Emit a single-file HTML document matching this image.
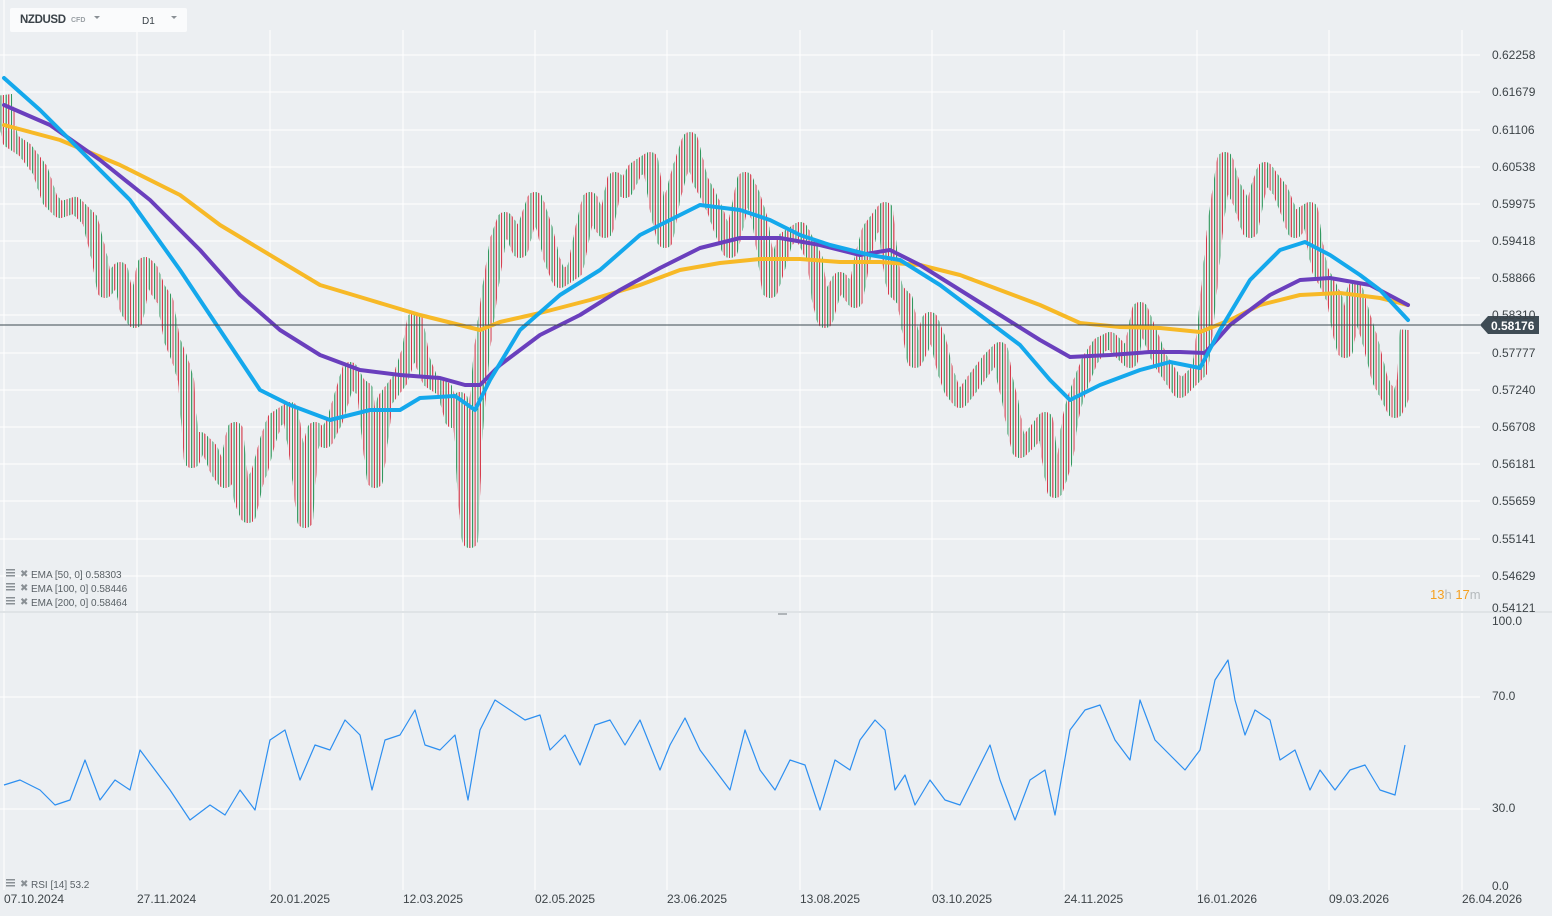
<!DOCTYPE html>
<html><head><meta charset="utf-8"><style>
html,body{margin:0;padding:0;background:#eceff2;}
body{width:1552px;height:916px;overflow:hidden;position:relative;font-family:"Liberation Sans",sans-serif;}
svg{position:absolute;left:0;top:0;}
.ax{font-size:12px;fill:#3d4448;}
.lg{font-size:10px;fill:#5a6166;}
</style></head><body>
<svg width="1552" height="916" viewBox="0 0 1552 916">
<defs>
<pattern id="cs" patternUnits="userSpaceOnUse" width="5.3" height="20">
<rect x="0" y="0" width="1.6" height="20" fill="#1f9050"/>
<rect x="2.6" y="0" width="1.6" height="20" fill="#d42a3c"/>
</pattern>
<pattern id="cw" patternUnits="userSpaceOnUse" width="5.3" height="20">
<rect x="0.5" y="0" width="0.7" height="20" fill="#1f9050"/>
<rect x="3.1" y="0" width="0.7" height="20" fill="#d42a3c"/>
</pattern>
<clipPath id="cp"><rect x="0" y="40" width="1410" height="560"/></clipPath>
</defs>
<g stroke="#ffffff" stroke-width="1">
<line x1="4" y1="0" x2="4" y2="890"/><line x1="137" y1="30" x2="137" y2="890"/><line x1="270" y1="30" x2="270" y2="890"/><line x1="403" y1="30" x2="403" y2="890"/><line x1="535" y1="30" x2="535" y2="890"/><line x1="667" y1="30" x2="667" y2="890"/><line x1="800" y1="30" x2="800" y2="890"/><line x1="932" y1="30" x2="932" y2="890"/><line x1="1064" y1="30" x2="1064" y2="890"/><line x1="1197" y1="30" x2="1197" y2="890"/><line x1="1329" y1="30" x2="1329" y2="890"/><line x1="1462" y1="30" x2="1462" y2="890"/>
<line x1="0" y1="55" x2="1480" y2="55"/><line x1="0" y1="92" x2="1480" y2="92"/><line x1="0" y1="130" x2="1480" y2="130"/><line x1="0" y1="167" x2="1480" y2="167"/><line x1="0" y1="204" x2="1480" y2="204"/><line x1="0" y1="241" x2="1480" y2="241"/><line x1="0" y1="278" x2="1480" y2="278"/><line x1="0" y1="315" x2="1480" y2="315"/><line x1="0" y1="353" x2="1480" y2="353"/><line x1="0" y1="390" x2="1480" y2="390"/><line x1="0" y1="427" x2="1480" y2="427"/><line x1="0" y1="464" x2="1480" y2="464"/><line x1="0" y1="501" x2="1480" y2="501"/><line x1="0" y1="539" x2="1480" y2="539"/><line x1="0" y1="576" x2="1480" y2="576"/>
<line x1="0" y1="697" x2="1480" y2="697"/><line x1="0" y1="809" x2="1480" y2="809"/>
<line x1="0" y1="612" x2="1552" y2="612" stroke="#dfe3e6" stroke-width="2"/>
</g>
<rect x="778" y="613" width="9" height="2" fill="#b0b5b9"/>
<g fill="none" stroke-linejoin="round" clip-path="url(#cp)">
<polyline id="px" stroke="url(#cw)" stroke-width="16" points="4,95 10,140 25,150 40,170 50,200 60,210 75,205 90,220 100,260 105,290 120,270 128,310 135,320 145,265 150,270 158,290 165,300 172,340 180,360 186,380 192,460 200,440 210,450 218,470 225,480 235,430 242,500 248,515 256,480 260,470 268,440 275,420 290,410 298,460 305,520 310,450 315,430 325,440 335,420 350,370 358,385 365,390 370,440 375,480 385,400 400,380 410,350 415,320 422,360 430,380 445,390 453,420 460,400 466,500 470,540 475,430 482,350 490,290 498,240 505,220 512,230 520,250 528,220 535,200 545,230 552,260 560,280 575,270 583,230 590,200 598,220 605,230 615,180 625,190 635,170 650,160 658,210 665,240 672,200 680,170 690,140 700,180 708,195 715,210 722,230 730,250 738,215 745,180 752,195 760,220 766,260 770,290 778,265 785,240 800,230 808,245 815,260 820,300 825,320 832,295 840,280 848,290 855,300 862,260 870,230 885,210 890,260 895,290 905,300 910,330 915,360 922,345 930,320 938,340 945,370 952,390 960,400 968,390 975,380 990,360 1000,350 1005,380 1010,400 1015,430 1020,450 1030,440 1045,420 1050,460 1055,490 1065,460 1070,420 1075,400 1082,380 1090,360 1100,345 1110,340 1120,350 1130,360 1140,310 1150,335 1160,360 1170,375 1180,390 1190,380 1200,370 1205,330 1210,280 1216,220 1225,160 1232,185 1240,200 1245,215 1250,230 1258,190 1265,170 1272,180 1280,190 1288,210 1295,230 1302,215 1310,210 1315,245 1320,270 1328,285 1335,300 1340,330 1345,350 1350,320 1355,290 1362,315 1370,340 1375,360 1380,380 1388,395 1395,410 1400,400 1405,380 1408,330"/>
<use href="#px" stroke="url(#cs)" stroke-width="8"/>
<use href="#px" stroke="#2a7048" stroke-width="1" opacity="0.5"/>
</g>
<g fill="none" stroke-linejoin="round">
<polyline stroke="#f7b927" stroke-width="4" stroke-linecap="round" points="4,125 60,140 120,165 180,195 220,225 270,255 320,285 370,300 420,315 460,325 480,330 500,322 540,313 590,300 640,285 680,270 720,263 760,259 800,259 840,262 880,262 920,265 960,275 1000,290 1040,305 1080,323 1120,327 1160,328 1200,332 1230,320 1260,305 1300,295 1340,293 1380,298 1408,305"/>
<polyline stroke="#6a3fbd" stroke-width="4" stroke-linecap="round" points="4,105 50,125 100,160 150,200 200,250 240,295 280,330 320,355 360,370 400,375 440,378 465,385 480,385 500,365 540,335 580,315 620,290 660,268 700,248 740,238 780,238 820,245 860,255 890,250 920,265 960,290 1000,315 1040,340 1070,357 1110,355 1150,352 1180,352 1205,353 1230,325 1270,295 1300,280 1330,278 1370,285 1408,305"/>
<polyline stroke="#14a8ec" stroke-width="4" stroke-linecap="round" points="4,78 40,110 80,150 130,200 180,270 220,330 260,390 290,405 330,420 370,410 400,410 420,398 455,396 475,410 490,380 520,330 560,295 600,270 640,235 670,220 700,205 740,210 770,220 800,235 830,245 870,255 900,260 940,285 980,315 1020,345 1050,380 1070,400 1100,385 1140,370 1170,362 1200,368 1220,330 1250,280 1280,250 1305,242 1330,255 1360,275 1380,290 1408,320"/>
<polyline stroke="#2d8ff0" stroke-width="1.2" points="4,785 20,780 40,790 55,805 70,800 85,760 100,800 115,780 130,790 140,750 155,770 170,790 190,820 210,805 225,815 240,790 255,810 270,740 285,730 300,780 315,745 330,750 345,720 360,735 372,790 385,740 400,735 415,710 425,745 440,750 455,735 468,800 480,730 495,700 510,710 525,720 540,715 550,750 565,735 580,765 595,725 610,720 625,745 640,720 660,770 670,745 685,718 700,750 715,770 730,790 745,730 760,770 775,790 790,760 805,765 820,810 835,760 850,770 860,740 875,720 885,730 895,790 905,775 915,805 930,780 945,800 960,805 975,775 990,745 1000,780 1015,820 1030,780 1045,770 1055,815 1070,730 1085,710 1100,705 1115,740 1130,760 1140,700 1155,740 1170,755 1185,770 1200,750 1215,680 1228,660 1235,700 1245,735 1255,710 1270,720 1280,760 1295,750 1310,790 1320,770 1335,790 1350,770 1365,765 1380,790 1395,795 1405,745"/>
</g>
<line x1="0" y1="325" x2="1480" y2="325" stroke="#3b4850" stroke-width="1"/>
<polygon points="1480,325 1488,316 1539,316 1539,334 1488,334" fill="#3f4c55"/>
<text x="1491" y="330" font-size="12" font-weight="bold" fill="#fff">0.58176</text>
<g class="ax">
<text x="1492" y="59">0.62258</text><text x="1492" y="96">0.61679</text><text x="1492" y="134">0.61106</text><text x="1492" y="171">0.60538</text><text x="1492" y="208">0.59975</text><text x="1492" y="245">0.59418</text><text x="1492" y="282">0.58866</text><text x="1492" y="319">0.58310</text><text x="1492" y="357">0.57777</text><text x="1492" y="394">0.57240</text><text x="1492" y="431">0.56708</text><text x="1492" y="468">0.56181</text><text x="1492" y="505">0.55659</text><text x="1492" y="543">0.55141</text><text x="1492" y="580">0.54629</text><text x="1492" y="612">0.54121</text>
<text x="1492" y="625">100.0</text><text x="1492" y="700">70.0</text><text x="1492" y="812">30.0</text><text x="1492" y="890">0.0</text>
<text x="4" y="903">07.10.2024</text><text x="137" y="903">27.11.2024</text><text x="270" y="903">20.01.2025</text><text x="403" y="903">12.03.2025</text><text x="535" y="903">02.05.2025</text><text x="667" y="903">23.06.2025</text><text x="800" y="903">13.08.2025</text><text x="932" y="903">03.10.2025</text><text x="1064" y="903">24.11.2025</text><text x="1197" y="903">16.01.2026</text><text x="1329" y="903">09.03.2026</text><text x="1462" y="903">26.04.2026</text>
</g>
<text x="1430" y="599" font-size="13"><tspan fill="#f5a020">13</tspan><tspan fill="#b5babd">h </tspan><tspan fill="#f5a020">17</tspan><tspan fill="#b5babd">m</tspan></text>
<g class="lg">
<rect x="6" y="569" width="9" height="1.5" fill="#8a9095"/><rect x="6" y="572" width="9" height="1.5" fill="#8a9095"/><rect x="6" y="575" width="9" height="1.5" fill="#8a9095"/><text x="20" y="577" fill="#8a9095">✖</text><text x="31" y="578">EMA [50, 0] 0.58303</text>
<rect x="6" y="583" width="9" height="1.5" fill="#8a9095"/><rect x="6" y="586" width="9" height="1.5" fill="#8a9095"/><rect x="6" y="589" width="9" height="1.5" fill="#8a9095"/><text x="20" y="591" fill="#8a9095">✖</text><text x="31" y="592">EMA [100, 0] 0.58446</text>
<rect x="6" y="597" width="9" height="1.5" fill="#8a9095"/><rect x="6" y="600" width="9" height="1.5" fill="#8a9095"/><rect x="6" y="603" width="9" height="1.5" fill="#8a9095"/><text x="20" y="605" fill="#8a9095">✖</text><text x="31" y="606">EMA [200, 0] 0.58464</text>
<rect x="6" y="879" width="9" height="1.5" fill="#8a9095"/><rect x="6" y="882" width="9" height="1.5" fill="#8a9095"/><rect x="6" y="885" width="9" height="1.5" fill="#8a9095"/><text x="20" y="887" fill="#8a9095">✖</text><text x="31" y="888">RSI [14] 53.2</text>
</g>
<rect x="10" y="8" width="177" height="24" rx="2" fill="#fafbfc"/>
<text x="20" y="23" font-size="11.5" font-weight="bold" fill="#3a4248" textLength="46">NZDUSD</text>
<text x="71" y="22" font-size="7" font-weight="bold" fill="#9aa0a5">CFD</text>
<polygon points="94,16 100,16 97,19" fill="#8a9095"/>
<text x="142" y="24" font-size="10" fill="#3a4248">D1</text>
<polygon points="171,16 177,16 174,19" fill="#8a9095"/>
</svg>
</body></html>
